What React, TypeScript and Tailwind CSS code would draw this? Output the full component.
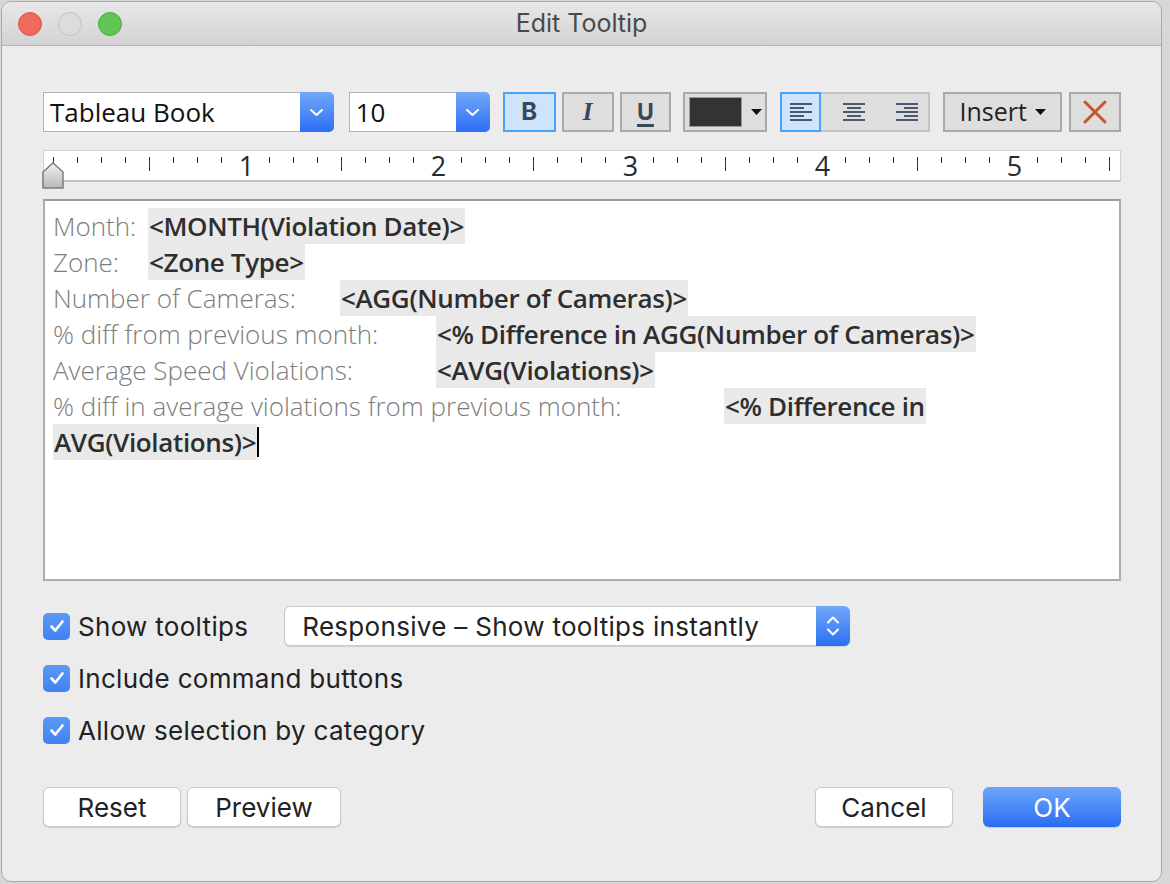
import React from 'react';

const rows = [
  { label: 'Month:', w: 'w-[95px]', value: '<MONTH(Violation Date)>' },
  { label: 'Zone:', w: 'w-[95px]', value: '<Zone Type>' },
  { label: 'Number of Cameras:', w: 'w-[287px]', value: '<AGG(Number of Cameras)>' },
  { label: '% diff from previous month:', w: 'w-[383px]', value: '<% Difference in AGG(Number of Cameras)>' },
  { label: 'Average Speed Violations:', w: 'w-[383px]', value: '<AVG(Violations)>' },
];

const Chevron = () => (
  <svg width="15" height="9" viewBox="0 0 15 9">
    <path d="M2 2l5.5 5 5.5-5" stroke="white" strokeWidth="2" fill="none" strokeLinecap="round" strokeLinejoin="round" />
  </svg>
);

const Caret = () => (
  <svg width="11" height="6" viewBox="0 0 11 6">
    <path d="M0 0h11L5.5 6z" fill="#111" />
  </svg>
);

const Dropdown = ({ value, width }: { value: string; width: string }) => (
  <div className={`flex h-[40px] ${width}`}>
    <div className="flex-1 flex items-center bg-white border border-[#b4b4b4] border-r-0 pl-[6px] text-[26px] text-[#111] font-['Open_Sans',sans-serif]">
      {value}
    </div>
    <div className="w-[34px] flex items-center justify-center rounded-r-[5px] bg-linear-to-b from-[#72a8f8] to-[#2b6ef5]">
      <Chevron />
    </div>
  </div>
);

const AlignIcon = ({ kind }: { kind: 'left' | 'center' | 'right' }) => {
  const long = 22;
  const short = 14;
  const xs = (len: number) => (kind === 'left' ? 0 : kind === 'center' ? (long - len) / 2 : long - len);
  const lens = [long, short, long, short, long];
  return (
    <svg width="22" height="18" viewBox="0 0 22 18">
      {lens.map((len, i) => (
        <rect key={i} x={xs(len)} y={i * 4} width={len} height="2" fill="#4b5870" />
      ))}
    </svg>
  );
};

// one 24px cell per eighth of an inch
const Ruler = () => {
  const cells = [];
  for (let k = 0; k <= 44; k++) {
    cells.push(
      <div key={k} className="w-[24px] h-[29px] shrink-0 flex justify-center">
        {k > 0 && k % 8 === 0 ? (
          <span className="text-[27px] leading-[29px] text-[#2b2b2b] font-['Open_Sans',sans-serif] pl-[3px]">{k / 8}</span>
        ) : (
          <div className={`mt-[6px] w-[1px] bg-[#333] ${k % 8 === 4 ? 'h-[14px]' : 'h-[6px]'}`} />
        )}
      </div>
    );
  }
  return <div className="flex -ml-[3px]">{cells}</div>;
};

const CheckBox = () => (
  <div className="w-[27px] h-[27px] rounded-[5px] bg-linear-to-b from-[#5c99f7] to-[#3f82f4] flex items-center justify-center">
    <svg width="16" height="14" viewBox="0 0 16 14">
      <path d="M2.5 7.5l3.8 4L13.5 2.5" stroke="white" strokeWidth="2.6" fill="none" strokeLinecap="round" strokeLinejoin="round" />
    </svg>
  </div>
);

const WhiteButton = ({ label, width }: { label: string; width: string }) => (
  <button className={`${width} h-[40px] rounded-[6px] bg-white border border-[#c8c8c8] shadow-[0_1px_1px_rgba(0,0,0,0.12)] text-[26px] text-[#222]`}>
    {label}
  </button>
);

const App: React.FC = () => {
  return (
    <div className="w-[1170px] h-[884px] bg-[#d7d7d7] overflow-hidden font-['Inter',sans-serif]">
      <div className="ml-[1px] mt-[1px] w-[1161px] h-[881px] rounded-[10px] border border-[#a9a9a9] bg-[#ececec] flex flex-col overflow-hidden">
        {/* Title bar */}
        <div className="h-[44px] shrink-0 flex items-center border-b border-[#b6b6b6] bg-linear-to-b from-[#e8e8e8] to-[#d3d3d3]">
          <div className="w-[200px] flex items-center gap-[16px] pl-[16px]">
            <div className="w-[24px] h-[24px] rounded-full bg-[#f0695f] border border-[#d9564c]" />
            <div className="w-[24px] h-[24px] rounded-full bg-[#dcdcdc] border border-[#c2c2c2]" />
            <div className="w-[24px] h-[24px] rounded-full bg-[#62c654] border border-[#4ea941]" />
          </div>
          <div className="flex-1 text-center text-[25px] text-[#4a4a4a]">Edit Tooltip</div>
          <div className="w-[200px]" />
        </div>

        <div className="pl-[41px] pr-[40px] flex flex-col">
          {/* Toolbar */}
          <div className="mt-[46px] h-[40px] flex items-center">
            <Dropdown value="Tableau Book" width="w-[291px]" />
            <div className="ml-[15px]">
              <Dropdown value="10" width="w-[141px]" />
            </div>
            <div className="ml-[13px] w-[53px] h-[40px] flex items-center justify-center bg-[#cde4fb] border-2 border-[#4da1f8] text-[24px] font-bold text-[#3b4657]">
              B
            </div>
            <div className="ml-[6px] w-[52px] h-[40px] flex items-center justify-center bg-[#dedede] border-2 border-[#a9a9a9] text-[25px] font-bold italic text-[#3b4657] font-['Liberation_Serif',serif]">
              I
            </div>
            <div className="ml-[6px] w-[52px] h-[40px] flex items-center justify-center bg-[#dedede] border-2 border-[#a9a9a9]">
              <span className="text-[23px] font-bold text-[#3b4657] underline decoration-[2.5px] underline-offset-[4px]">U</span>
            </div>
            <div className="ml-[12px] w-[84px] h-[40px] flex items-center bg-[#dedede] border-2 border-[#a9a9a9] pl-[4px] gap-[9px]">
              <div className="w-[53px] h-[30px] bg-[#333] border border-[#9a9a9a]" />
              <Caret />
            </div>
            <div className="ml-[13px] w-[150px] h-[40px] flex bg-[#dedede] border-2 border-[#c2c2c2]">
              <div className="w-[41px] -m-[2px] h-[40px] flex items-center justify-center bg-[#cde4fb] border-2 border-[#4da1f8]">
                <AlignIcon kind="left" />
              </div>
              <div className="w-[65px] ml-[2px] flex items-center justify-center">
                <AlignIcon kind="center" />
              </div>
              <div className="flex-1 flex items-center justify-center">
                <AlignIcon kind="right" />
              </div>
            </div>
            <div className="ml-[13px] w-[119px] h-[40px] flex items-center justify-center gap-[8px] bg-[#dedede] border-2 border-[#a9a9a9] text-[25px] text-[#222] font-['Open_Sans',sans-serif]">
              Insert
              <Caret />
            </div>
            <div className="ml-[7px] w-[52px] h-[40px] flex items-center justify-center bg-[#dedede] border-2 border-[#a9a9a9]">
              <svg width="26" height="26" viewBox="0 0 26 26">
                <path d="M3 3l20 20M23 3L3 23" stroke="#c4542e" strokeWidth="3" strokeLinecap="round" />
              </svg>
            </div>
          </div>

          {/* Ruler */}
          <div className="relative mt-[18px] h-[32px] bg-white border border-[#d0d0d0] border-b-2 border-b-[#c2c2c2]">
            <Ruler />
            <svg width="22" height="27" viewBox="0 0 22 27" className="absolute left-[-2px] top-[11px]">
              <defs>
                <linearGradient id="mk" x1="0" y1="0" x2="0" y2="1">
                  <stop offset="0" stopColor="#f2f2f2" />
                  <stop offset="1" stopColor="#b8b8b8" />
                </linearGradient>
              </defs>
              <path d="M1 10L11 1l10 9v16H1z" fill="url(#mk)" stroke="#7d7d7d" strokeWidth="1.5" />
            </svg>
          </div>

          {/* Editor */}
          <div className="mt-[17px] h-[382px] bg-white border-2 border-[#acacac] border-t-[#9c9c9c] pl-[8px] pt-[7px] text-[26px] font-['Open_Sans',sans-serif]">
            {rows.map((r) => (
              <div key={r.label} className="h-[36px] leading-[36px] whitespace-nowrap flex">
                <span className={`${r.w} shrink-0 text-[#7d7d7d] font-light`}>{r.label}</span>
                <span className="bg-[#e9e9e9] text-[#2e2e2e] font-semibold px-[1px] tracking-[-0.35px]">{r.value}</span>
              </div>
            ))}
            <div className="h-[36px] leading-[36px] whitespace-nowrap flex">
              <span className="w-[671px] shrink-0 text-[#7d7d7d] font-light">% diff in average violations from previous month:</span>
              <span className="bg-[#e9e9e9] text-[#2e2e2e] font-semibold px-[1px] tracking-[-0.35px]">{'<% Difference in'}</span>
            </div>
            <div className="h-[36px] leading-[36px] whitespace-nowrap flex items-center">
              <span className="bg-[#e9e9e9] text-[#2e2e2e] font-semibold px-[1px] tracking-[-0.35px]">{'AVG(Violations)>'}</span>
              <span className="w-[2px] h-[30px] bg-black" />
            </div>
          </div>

          {/* Options */}
          <div className="mt-[25px] flex flex-col gap-[12px] text-[26px] text-[#222] tracking-[0.3px]">
            <div className="h-[40px] flex items-center">
              <CheckBox />
              <span className="ml-[8px]">Show tooltips</span>
              <div className="ml-[36px] w-[566px] h-[40px] flex rounded-[6px] bg-white border border-[#c8c8c8] shadow-[0_1px_1px_rgba(0,0,0,0.12)]">
                <div className="flex-1 flex items-center pl-[17px]">Responsive – Show tooltips instantly</div>
                <div className="w-[34px] -my-[1px] -mr-[1px] rounded-r-[6px] flex flex-col items-center justify-center gap-[4px] bg-linear-to-b from-[#72a8f8] to-[#2b6ef5]">
                  <svg width="14" height="8" viewBox="0 0 14 8">
                    <path d="M2 6.5l5-5 5 5" stroke="white" strokeWidth="2" fill="none" strokeLinecap="round" strokeLinejoin="round" />
                  </svg>
                  <svg width="14" height="8" viewBox="0 0 14 8">
                    <path d="M2 1.5l5 5 5-5" stroke="white" strokeWidth="2" fill="none" strokeLinecap="round" strokeLinejoin="round" />
                  </svg>
                </div>
              </div>
            </div>
            <div className="h-[40px] flex items-center">
              <CheckBox />
              <span className="ml-[8px]">Include command buttons</span>
            </div>
            <div className="h-[40px] flex items-center">
              <CheckBox />
              <span className="ml-[8px]">Allow selection by category</span>
            </div>
          </div>

          {/* Buttons */}
          <div className="mt-[37px] flex items-center">
            <WhiteButton label="Reset" width="w-[138px]" />
            <div className="ml-[6px]">
              <WhiteButton label="Preview" width="w-[154px]" />
            </div>
            <div className="flex-1" />
            <WhiteButton label="Cancel" width="w-[138px]" />
            <button className="ml-[30px] w-[138px] h-[40px] rounded-[6px] bg-linear-to-b from-[#6ea5f8] to-[#2a6cf5] text-[26px] text-white shadow-[0_1px_1px_rgba(0,0,0,0.15)]">
              OK
            </button>
          </div>
        </div>
      </div>
    </div>
  );
};

export default App;
